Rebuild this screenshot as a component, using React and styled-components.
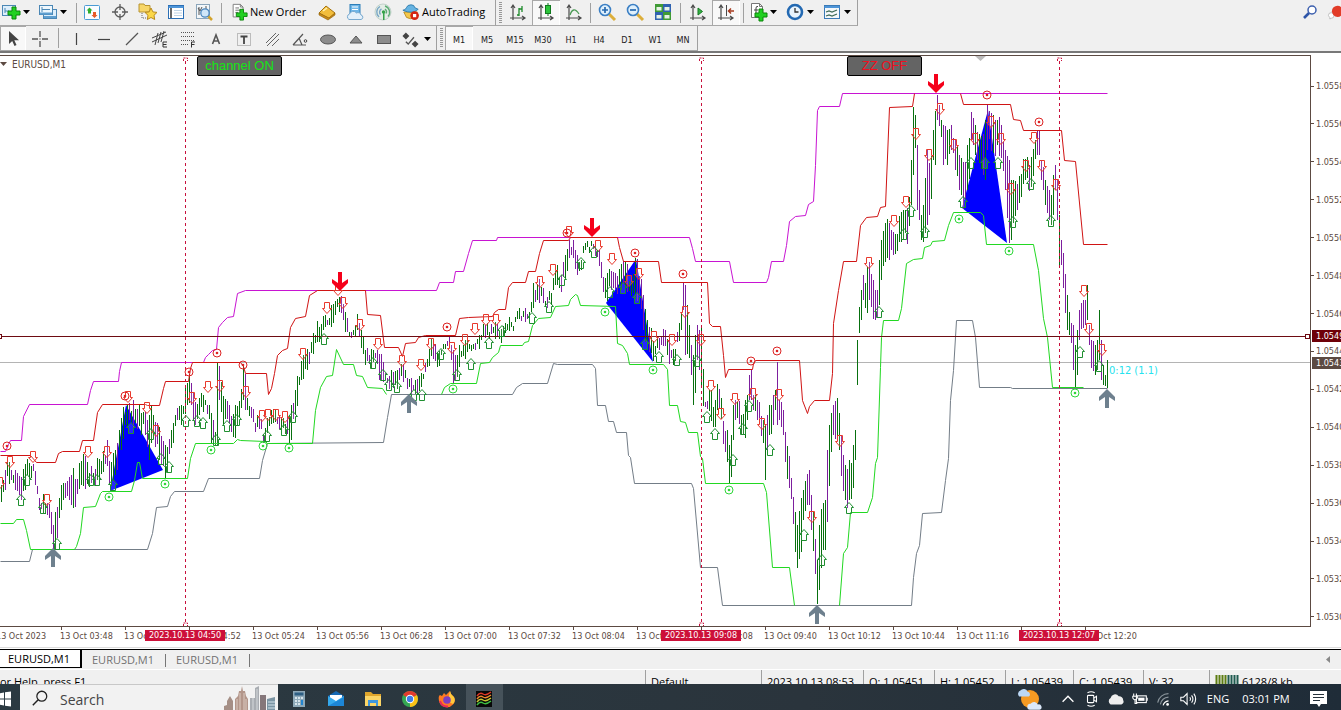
import React from "react";
import styled, { createGlobalStyle, css } from "styled-components";

const UI = `"Open Sans", "Noto Sans", sans-serif`;
const SMALL = `"DejaVu Sans Condensed", "DejaVu Sans", sans-serif`;
const BROWN = "#5c4a42";

const Global = createGlobalStyle`
  * { box-sizing: border-box; }
  body { margin: 0; background: #f0f0f0; font-family: ${UI}; font-size: 11px; color: #111; }
  button, input { font: inherit; color: inherit; }
`;

/* ---------- frame ---------- */
const Shell = styled.div`
  display: flex;
  flex-direction: column;
  height: 100vh;
  min-height: 480px;
  overflow: hidden;
`;
const ToolRow = styled.div`
  display: flex;
  flex: none;
  height: ${(p) => p.$h}px;
  background: #f0f0f0;
`;
const ToolGroup = styled.div`
  display: flex;
  align-items: stretch;
  flex: none;
  width: ${(p) => p.$w}px;
  border-right: 1px solid #a0a0a0;
  border-bottom: 1px solid #a8a8a8;
`;
const Spacer = styled.div`
  flex: 1;
`;
const buttonReset = css`
  border: 0;
  padding: 0;
  background: none;
  display: flex;
  align-items: center;
  justify-content: center;
  white-space: nowrap;
`;
const ToolButton = styled.button`
  ${buttonReset}
  flex: none;
  width: ${(p) => p.$w || 28}px;
  padding-${(p) => (p.$low ? "top" : "bottom")}: 2px;
  ${(p) =>
    p.$on &&
    css`
      background: #f8f8f8;
      box-shadow: inset 1px 1px 0 #a8a8a8, inset -1px 0 0 #fff;
    `}
`;
const PeriodButton = styled(ToolButton)`
  font-family: ${SMALL};
  font-size: 9px;
  color: #222;
  padding-top: 3px;
`;
const LabelButton = styled.button`
  ${buttonReset}
  flex: none;
  justify-content: flex-start;
  gap: 2px;
  padding: 0 0 2px 5px;
  width: ${(p) => p.$w}px;
  font-size: 11px;
  color: #000;
`;
const SplitButton = styled.button`
  ${buttonReset}
  flex: none;
  justify-content: flex-start;
  gap: 2px;
  width: 37px;
  padding-left: 1px;
  padding-${(p) => (p.$low ? "top" : "bottom")}: 2px;
`;
const Separator = styled.span`
  flex: none;
  display: flex;
  justify-content: center;
  align-items: center;
  width: ${(p) => p.$w}px;
  &::before {
    content: "";
    width: 1px;
    height: 20px;
    background: #a0a0a0;
  }
`;
const Grip = styled.span`
  flex: none;
  width: 3px;
  margin: 2px 2px 2px 3px;
  background: repeating-linear-gradient(#999 0 1px, #f0f0f0 1px 2px);
`;
const Divider = styled.div`
  flex: none;
  height: 4px;
  background: #fff;
  border-top: 2px solid #787878;
`;

/* ---------- chart ---------- */
const ChartWindow = styled.main`
  flex: 1;
  min-height: 0;
  display: grid;
  grid-template-columns: minmax(0, 1fr) 30px;
  grid-template-rows: minmax(0, 1fr) 22px;
  background: #fff;
  color: ${BROWN};
  font-family: ${SMALL};
  font-size: 9px;
`;
const Plot = styled.section`
  position: relative;
  min-height: 0;
  border: solid ${BROWN};
  border-width: 1px 1px 1px 0;
  overflow: hidden;
`;
const PlotSvg = styled.svg`
  display: block;
  width: 100%;
  height: 100%;
`;
const PlotTitle = styled.div`
  position: absolute;
  left: 0;
  top: 1px;
  display: flex;
  align-items: center;
  gap: 5px;
  height: 14px;
  font-size: 10px;
`;
const PlotButton = styled.button`
  position: absolute;
  top: 0;
  left: ${(p) => p.$x}px;
  width: ${(p) => p.$w}px;
  height: 20px;
  padding: 0;
  border: 1px solid #000;
  border-radius: 2px;
  background: #646464;
  color: ${(p) => p.$c};
  font-family: "Liberation Sans", sans-serif;
  font-size: 13px;
  line-height: 18px;
`;
const PriceAxis = styled.aside`
  position: relative;
  display: flex;
  flex-direction: column;
  justify-content: space-between;
  padding: 25px 0 4px;
  overflow: hidden;
`;
const PriceLabel = styled.span`
  display: flex;
  align-items: center;
  gap: 2px;
  height: 12px;
  white-space: nowrap;
  &::before {
    content: "";
    flex: none;
    width: 3px;
    height: 1px;
    background: ${BROWN};
  }
`;
const PriceTag = styled.span`
  position: absolute;
  left: 1px;
  right: 0;
  top: ${(p) => p.$y}px;
  height: 12px;
  padding-left: 4px;
  line-height: 12px;
  background: ${(p) => p.$bg};
  color: #fff;
`;
const TimeAxis = styled.footer`
  position: relative;
  grid-column: 1 / -1;
  display: flex;
  overflow: hidden;
  border-bottom: 1px solid #fff;
  box-shadow: inset 0 -1px 0 #dcdcdc;
`;
const TimeLabel = styled.span`
  flex: none;
  width: 64px;
  white-space: nowrap;
  line-height: 12px;
  &:first-child {
    margin-left: -4px;
  }
  &::before {
    content: "";
    display: block;
    width: 1px;
    height: 3px;
    margin-left: 1px;
    background: ${BROWN};
  }
`;
const TimeTag = styled.span`
  position: absolute;
  top: 3px;
  left: ${(p) => p.$x}px;
  width: 80px;
  height: 11px;
  line-height: 11px;
  text-align: center;
  background: #cd1039;
  color: #fff;
`;

/* ---------- tabs and status ---------- */
const TabBar = styled.nav`
  flex: none;
  display: flex;
  align-items: flex-start;
  height: 21px;
  border-top: 1px solid #000;
  box-shadow: inset 0 -1px 0 #fff;
`;
const Tab = styled.button`
  ${buttonReset}
  height: 18px;
  width: ${(p) => (p.$on ? 82 : 84)}px;
  color: ${(p) => (p.$on ? "#000" : "#707070")};
  ${(p) =>
    p.$on
      ? css`
          background: #fff;
          border: solid #000;
          border-width: 0 2px 1px 0;
          padding-right: 2px;
        `
      : css`
          padding-right: 2px;
          background: linear-gradient(#777, #777) right 4px / 1px 13px no-repeat;
        `}
`;
const TabScroll = styled.button`
  ${buttonReset}
  width: 26px;
  height: 18px;
`;
const StatusBar = styled.div`
  flex: none;
  display: grid;
  grid-template-columns: 1fr 116px 102px 71px 71px 68px 70px 66px 132px;
  height: 14px;
  overflow: hidden;
  color: #000;
`;
const StatusCell = styled.span`
  display: flex;
  align-items: center;
  gap: 3px;
  height: 22px;
  padding-left: 5px;
  white-space: nowrap;
  border-left: 1px solid #a0a0a0;
  &:first-child {
    padding-left: 0;
    border: 0;
  }
`;

/* ---------- taskbar ---------- */
const Taskbar = styled.footer`
  flex: none;
  display: flex;
  height: 26px;
  overflow: hidden;
  color: #fff;
  background: linear-gradient(90deg, #2b3a42, #2a343c 60%, #1f2c38);
`;
const StartButton = styled.button`
  ${buttonReset}
  width: 20px;
  justify-content: flex-start;
  padding-top: 3px;
`;
const SearchBox = styled.label`
  display: flex;
  align-items: center;
  width: 258px;
  padding-left: 11px;
  gap: 11px;
  background: #f2f2f2;
  border-top: 1px solid #c8c8c8;
`;
const SearchInput = styled.input`
  flex: 1;
  min-width: 0;
  height: 24px;
  padding: 4px 0 0;
  border: 0;
  outline: 0;
  background: none;
  font-size: 14px;
  color: #333;
  &::placeholder {
    color: #444;
    opacity: 1;
  }
`;
const AppIcons = styled.div`
  display: flex;
  padding-left: 3px;
  align-items: stretch;
`;
const AppButton = styled.button`
  ${buttonReset}
  width: 37px;
  padding-top: 3px;
  padding-right: 2px;
  ${(p) => p.$on && css`background: #46525a;`}
`;
const TrayButton = styled.button`
  ${buttonReset}
  flex: none;
  width: ${(p) => p.$w || 24}px;
  padding-top: 3px;
  color: #fff;
`;

/* ---------- icons ---------- */
const Ico = ({ s = 20, children }) => (
  <svg width={s} height={s} viewBox="0 0 20 20" fill="none" aria-hidden="true">
    {children}
  </svg>
);
const Caret = ({ fill = "#000" }) => (
  <svg width="7" height="4" viewBox="0 0 7 4" aria-hidden="true">
    <path d="M0 0h7L3.500 4z" fill={fill} />
  </svg>
);
const Plus = ({ x = 0, y = 0 }) => (
  <path
    transform={`translate(${x} ${y})`}
    d="M4 0h4v4h4v4H8v4H4V8H0V4h4z"
    fill="#22d022"
    stroke="#0a850a"
  />
);
const Axes = () => (
  <path d="M5 18V4M3 6l2-3 2 3M2 16h14M14 14l3 2-3 2" stroke="#4a4a4a" strokeWidth="1.2" />
);
const Sheet = () => (
  <path d="M3.500 1.500h8l3 3v11h-11zM11.500 1.500v3h3" fill="#fff" stroke="#777" />
);

const icons = {
  newChart: (
    <>
      <rect x="1.500" y="3.500" width="13" height="10" fill="#dceefb" stroke="#4b87b5" />
      <path d="M4 6v5M4 9h4" stroke="#4b87b5" />
      <Plus x={7} y={5} />
    </>
  ),
  profiles: (
    <>
      <rect x="5.500" y="7.500" width="13" height="9" fill="#dceefb" stroke="#4b87b5" />
      <path d="M6 15h12" stroke="#5f9fd0" strokeWidth="2" />
      <rect x="1.500" y="3.500" width="13" height="9" fill="#eef7fd" stroke="#4b87b5" />
      <path d="M4 5v5M4 7.500h8" stroke="#4b87b5" />
      <path d="M2 11.500h12" stroke="#5f9fd0" strokeWidth="2" />
    </>
  ),
  market: (
    <>
      <rect x="2.500" y="3.500" width="15" height="14" rx="1" fill="#fafcff" stroke="#4b9bd5" />
      <path d="M7.500 5.500l3 3H9v3H6v-3H4.500z" fill="#2fae2f" />
      <path d="M12.500 16l3-3H14v-3h-3v3H9.500z" fill="#e65a28" />
    </>
  ),
  navigator: (
    <g stroke="#5c5c5c" strokeWidth="1.300">
      <circle cx="10" cy="10" r="5" />
      <path d="M10 2v6M10 12v6M2 10h6M12 10h6" />
    </g>
  ),
  favorites: (
    <>
      <path d="M1 2h5l1 1.500h5V10H1z" fill="#f7d668" stroke="#b89432" />
      <path d="M4 11v5h4" stroke="#666" strokeDasharray="1 1" />
      <path d="M13 6l1.900 3.900 4.100.5-3 2.900.7 4.200-3.700-2-3.700 2 .7-4.200-3-2.900 4.100-.5z" fill="#fbd748" stroke="#b98a1c" />
    </>
  ),
  dataWindow: (
    <>
      <rect x="2.500" y="3.500" width="15" height="13" fill="#fff" stroke="#2b6fb5" />
      <path d="M2.500 5h15" stroke="#4e95d8" strokeWidth="2" />
      <path d="M5 6v10" stroke="#333" strokeWidth="1.500" />
      <path d="M8 8.500h8M8 11h8M8 13.500h8" stroke="#c0d4e6" />
    </>
  ),
  tester: (
    <>
      <rect x="2.500" y="2.500" width="13" height="14" fill="#f3f7fa" stroke="#8ba5ba" />
      <path d="M4 6l2 3 2-4M5 5v8M12 4v3" stroke="#555" />
      <path d="M14 14l4 4" stroke="#d3a32c" strokeWidth="2.500" />
      <circle cx="11" cy="11" r="4.200" fill="#cfe6f8" stroke="#4a86bd" strokeWidth="1.300" />
    </>
  ),
  order: (
    <>
      <Sheet />
      <path d="M6 5.500h4M6 8h6M6 10.500h3" stroke="#666" />
      <Plus x={7} y={7} />
    </>
  ),
  editor: (
    <>
      <path d="M2 11L9 4l9 7-6 5.500z" fill="#f2bd3c" stroke="#a6730e" />
      <path d="M2 11v2l9 5 7-5v-2l-6 5z" fill="#c98a1a" stroke="#8f610b" strokeWidth=".6" />
      <path d="M6 9l4-3" stroke="#fff0b0" strokeWidth="1.500" />
    </>
  ),
  cloudPc: (
    <>
      <rect x="5" y="2.500" width="10" height="10" fill="#6fb6e8" stroke="#2d7eb8" />
      <path d="M7 5h6M7 7.500h6" stroke="#fff" />
      <path d="M4 17.500a3 3 0 0 1 .5-5.500 4 4 0 0 1 7-1 3 3 0 0 1 4.500 2 2.300 2.300 0 0 1 0 4.500z" fill="#e4f0fa" stroke="#78a9cf" />
    </>
  ),
  signals: (
    <>
      <circle cx="10" cy="10" r="8" fill="#e3ede6" stroke="#c3d2cb" />
      <path d="M6 15a6.500 6.500 0 0 1 1-10.500M7.500 12.500a3.500 3.500 0 0 1 1-5.500" stroke="#7aa6c6" strokeWidth="1.400" />
      <path d="M12 4a6.500 6.500 0 0 1 3 10.500M12 7a3.500 3.500 0 0 1 1 4.500" stroke="#5dac74" strokeWidth="1.400" />
      <circle cx="10.500" cy="10" r="1.700" fill="#35a348" />
      <path d="M10 11h1.500v7H10z" fill="#35a348" />
    </>
  ),
  auto: (
    <>
      <path d="M2 10l3 6q5 3 9 0l3-6z" fill="#f4c84c" stroke="#b88a22" />
      <path d="M1 8q3 0 4-3 1-3 5-3t4 3l4 2q-7 6-17 1z" fill="#65b3e2" stroke="#2e7bab" />
      <circle cx="14" cy="14" r="4.800" fill="#d62412" />
      <rect x="12.200" y="12.200" width="3.600" height="3.600" fill="#fff" />
    </>
  ),
  bars: (
    <>
      <Axes />
      <path d="M11 6v8M9 13h2M11 7h3M14 4v6" stroke="#1d8a2a" strokeWidth="1.300" />
    </>
  ),
  candles: (
    <>
      <Axes />
      <path d="M12 1v13" stroke="#117a1e" />
      <rect x="9.500" y="3.500" width="5" height="8" fill="#2bc43a" stroke="#117a1e" />
    </>
  ),
  line: (
    <>
      <Axes />
      <path d="M6 13c2-6 5-7 9-1" stroke="#4b9a55" strokeWidth="1.300" />
    </>
  ),
  zoomIn: (
    <>
      <path d="M12 12l6 6" stroke="#dcae3a" strokeWidth="3" />
      <circle cx="8" cy="8" r="5.500" fill="#dff0fc" stroke="#3b7fc4" strokeWidth="1.600" />
      <path d="M5 8h6M8 5v6" stroke="#2769b0" strokeWidth="1.700" />
    </>
  ),
  zoomOut: (
    <>
      <path d="M12 12l6 6" stroke="#dcae3a" strokeWidth="3" />
      <circle cx="8" cy="8" r="5.500" fill="#dff0fc" stroke="#3b7fc4" strokeWidth="1.600" />
      <path d="M5 8h6" stroke="#2769b0" strokeWidth="1.700" />
    </>
  ),
  tile: (
    <>
      <rect x="2" y="2" width="8" height="8" fill="#3f9a35" />
      <rect x="10" y="2" width="8" height="8" fill="#2f62b0" />
      <rect x="2" y="10" width="8" height="8" fill="#2f62b0" />
      <rect x="10" y="10" width="8" height="8" fill="#3f9a35" />
      <path d="M3.500 5h5v3.500h-5zM11.500 5h5v3.500h-5zM3.500 13h5v3.500h-5zM11.500 13h5v3.500h-5z" fill="#e6f2e6" />
    </>
  ),
  scroll: (
    <>
      <Axes />
      <path d="M10 6l4.500 3.500L10 13z" fill="#35b043" stroke="#157a22" />
    </>
  ),
  shift: (
    <>
      <Axes />
      <path d="M10.500 3v11" stroke="#4a4a4a" />
      <path d="M18 9h-5M15 6.500L12.500 9l2.500 2.500" stroke="#a63a1e" strokeWidth="1.500" />
    </>
  ),
  indicators: (
    <>
      <Sheet />
      <path d="M8 12V6q0-2 2-1.500M6 8h4" stroke="#444" />
      <Plus x={7} y={7} />
    </>
  ),
  clock: (
    <>
      <circle cx="10" cy="10" r="7" fill="#e9f4fd" stroke="#2369b2" strokeWidth="2.600" />
      <path d="M10 6v4h3.500" stroke="#333" strokeWidth="1.300" />
    </>
  ),
  template: (
    <>
      <rect x="2.500" y="3.500" width="15" height="13" fill="#f4f8fb" stroke="#3a7ab6" />
      <path d="M2.500 5h15" stroke="#4e95d8" strokeWidth="2" />
      <path d="M4 10l3-1 3 1 5-2M4 14l3-1 3 1 5-2" stroke="#3f6b57" strokeWidth="1.200" />
    </>
  ),
  cursor: <path d="M6 2v13l3.200-3 2.300 5 2-1-2.200-4.700H16z" fill="#444" />,
  cross: <path d="M10 2v6M10 12v6M2 10h6M12 10h6M10 9.500v1" stroke="#555" strokeWidth="1.300" />,
  vline: <path d="M10.500 4v12" stroke="#444" strokeWidth="1.200" />,
  hline: <path d="M4 10.500h12" stroke="#444" strokeWidth="1.200" />,
  trend: <path d="M4 16L16 4" stroke="#555" strokeWidth="1.200" />,
  channel: (
    <>
      <path d="M2 13L17 6M2 9l14-6M5 16L8 4M8 14l3-11M11 13l3-11" stroke="#444" />
      <path d="M17 13h-4v5h4M13 15.500h3.500" stroke="#333" />
    </>
  ),
  fibo: (
    <>
      <path d="M3 3.500h14M3 7.500h14M3 11.500h14M3 15.500h8" stroke="#555" strokeDasharray="1 1" />
      <path d="M17 13h-3.500v5.500M13.500 15.500h3" stroke="#333" />
    </>
  ),
  letter: <path d="M6.500 15L10 6l3.500 9M8 12h4" stroke="#555" strokeWidth="1.600" />,
  label: (
    <>
      <rect x="3.500" y="4.500" width="13" height="12" stroke="#888" strokeDasharray="1 1" />
      <path d="M6.500 7.500h7M10 7.500V15" stroke="#444" strokeWidth="1.800" />
    </>
  ),
  parallels: <path d="M4 14L14 4M5 17L17 5M10 17l7-7" stroke="#666" />,
  angle: (
    <>
      <path d="M3 16h13M3 16L13 5M9 9l3 7" stroke="#555" strokeWidth="1.200" />
      <circle cx="15.500" cy="12" r="1.300" stroke="#444" />
    </>
  ),
  ellipse: <ellipse cx="10" cy="10.500" rx="7.500" ry="4.500" fill="#8c8c8c" stroke="#555" />,
  triangle: <path d="M4 14l6-7 6 7z" fill="#8c8c8c" stroke="#555" />,
  rect: <rect x="3.500" y="6.500" width="13" height="8" fill="#8c8c8c" stroke="#555" />,
  arrows: (
    <>
      <path d="M3 7l3-3 3 3-3 3zM11 14l3-3 3 3-3 3z" fill="#444" />
      <path d="M6 12l2 2 5-6" stroke="#555" strokeWidth="1.200" />
    </>
  ),
  find: (
    <>
      <circle cx="12" cy="8" r="4" fill="#fff" stroke="#3c5fae" strokeWidth="1.500" />
      <path d="M9 11l-5 5" stroke="#2e55a8" strokeWidth="2.600" />
    </>
  ),
  chat: (
    <>
      <path d="M2 15a4 4 0 1 1 4 4l-2 1v-2z" fill="#fff" stroke="#aaa" />
      <circle cx="15" cy="9" r="8" fill="#e23c28" />
    </>
  ),
  windows: <path d="M-2 4.500l6-1v6h-6zM5 3.300l6-.8v7H5zM-2 10.500h6v6l-6-1zM5 10.500h6v7l-6-.8z" fill="#fff" />,
  magnifier: (
    <>
      <circle cx="12" cy="8" r="5.500" stroke="#222" strokeWidth="1.400" />
      <path d="M8 12l-6 6" stroke="#222" strokeWidth="1.600" />
    </>
  ),
  calc: (
    <>
      <rect x="4" y="2" width="12" height="16" fill="#8ea9b8" />
      <rect x="5.500" y="3.500" width="9" height="3" fill="#2e5f83" />
      <path d="M6 9h2M9 9h2M12 9h2M6 12h2M9 12h2M6 15h2M9 15h2" stroke="#eef6fa" strokeWidth="1.600" />
      <path d="M13 11v5" stroke="#2385cf" strokeWidth="2" />
    </>
  ),
  mail: (
    <>
      <path d="M2 7l8-5 8 5v10H2z" fill="#1769b3" />
      <path d="M4 6h12v7H4z" fill="#fff" />
      <path d="M2 7l8 5 8-5v10H2z" fill="#35a9ec" />
      <path d="M2 17l16-9v9z" fill="#1d86d6" />
    </>
  ),
  folder: (
    <>
      <path d="M2 3h6l2 2h8v12H2z" fill="#e0a62c" />
      <path d="M2 7h16v10H2z" fill="#fcd667" />
      <path d="M5 11h10v6h-2v-3H7v3H5z" fill="#3f97dd" />
    </>
  ),
  chrome: (
    <>
      <circle cx="10" cy="10" r="8" fill="#35a853" />
      <path d="M10 10L3.100 6A8 8 0 0 1 16.900 6z" fill="#e33b2e" />
      <path d="M10 10l6.900-4A8 8 0 0 1 10 18z" fill="#fbc116" />
      <circle cx="10" cy="10" r="4.200" fill="#fff" />
      <circle cx="10" cy="10" r="3.200" fill="#3e7de8" />
    </>
  ),
  firefox: (
    <>
      <path d="M3 6l2 1 2-3 2 2 4-4 1 3 3 3q2 4-1 7.500T8 18 2 12t1-6z" fill="#ff7a22" />
      <path d="M13 2l1 3 3 3q2 4-1 7l-4-2V6z" fill="#ffc93c" />
      <circle cx="10" cy="11" r="3.800" fill="#7d3fc0" />
      <path d="M3 12q2 6 8 5.500" stroke="#e8285a" strokeWidth="2" />
    </>
  ),
  terminal: (
    <>
      <rect x="2" y="2" width="16" height="16" fill="#080808" />
      <path d="M3 7q3-4 6-2t8-2" stroke="#e03828" strokeWidth="1.500" />
      <path d="M3 10q3-4 6-2t8-2" stroke="#ef8a2c" strokeWidth="1.500" />
      <path d="M3 13q3-4 6-2t8-2" stroke="#c9c934" strokeWidth="1.500" />
      <path d="M3 16q3-4 6-2t8-2" stroke="#3fc242" strokeWidth="1.500" />
    </>
  ),
  weather: (
    <>
      <circle cx="10" cy="10" r="7.500" fill="#f59a23" />
      <path d="M1 8a3 3 0 0 1 1-5 3.500 3.500 0 0 1 6 1 2.200 2.200 0 0 1 1 4z" fill="#bcd8f5" />
      <path d="M10 19a2.500 2.500 0 0 1 .5-5 3.500 3.500 0 0 1 6 .5A2.300 2.300 0 0 1 18 19z" fill="#dbe8fa" />
    </>
  ),
  up: <path d="M4 13l6-6 6 6" stroke="currentColor" strokeWidth="1.500" />,
  meet: (
    <g stroke="currentColor" strokeWidth="1.200">
      <rect x="5" y="6" width="7" height="8" rx="1" />
      <path d="M12 9l3-2v6l-3-2M5 3q4-2 8 0M5 17q4 2 8 0" />
    </g>
  ),
  cloud: <path d="M4 16a4 4 0 0 1 0-7 5 5 0 0 1 9-2 4.500 4.500 0 0 1 5 4.500A3 3 0 0 1 16 16z" fill="#eee" />,
  battery: (
    <>
      <rect x="6" y="6.500" width="11" height="7.500" stroke="currentColor" strokeWidth="1.200" />
      <path d="M8 8.500h7v3.500H8z" fill="currentColor" />
      <path d="M18 8.500v3.500M3 4v3M6 4v3M2 7h5v2q-1 2-2.500 2T2 9zM4.500 11v4H7" stroke="currentColor" strokeWidth="1.200" />
    </>
  ),
  wifi: (
    <g strokeWidth="1.300">
      <path d="M3 14A12 12 0 0 1 15 4M6 16a10 10 0 0 1 9-8" stroke="#8b959c" />
      <path d="M9 17a7 7 0 0 1 6-5" stroke="#fff" />
      <circle cx="14" cy="16" r="1.500" fill="#fff" />
    </g>
  ),
  sound: (
    <g stroke="currentColor" strokeWidth="1.200">
      <path d="M2 8h3l4-4v12l-4-4H2zM12 8q1.500 2 0 4M14 6q3 4 0 8M16.500 4q4 6 0 12" />
    </g>
  ),
  notice: (
    <>
      <path d="M1 2h17v13h-6l-2 3-2-3H1z" fill="#fff" />
      <path d="M4 5.500h11M4 8.500h11M4 11.500h7" stroke="#25313b" strokeWidth="1.200" />
    </>
  ),
};

const Tool = ({ icon, w, on, low }) => (
  <ToolButton $w={w} $on={on} $low={low} aria-label={icon}>
    <Ico>{icons[icon]}</Ico>
  </ToolButton>
);
const Split = ({ icon, s = 20, low }) => (
  <SplitButton $low={low} aria-label={icon}>
    <Ico s={s}>{icons[icon]}</Ico>
    <Caret />
  </SplitButton>
);

/* ---------- chart data: x, high, low ---------- */
const swings = `1 485 502,5 470 490,8 458 480,12 466 488,16 470 495,20 478 500,24 465 490,28 462 480,32 461 475,36 470 490,39 498 510,42 495 515,46 498 510,50 510 528,53 525 549,55 512 549,58 507 530,61 485 510,64 488 500,68 480 495,72 470 506,76 478 505,80 463 480,84 452 490,88 465 490,92 470 488,96 462 480,100 455 478,104 452 470,107 440 466,110 460 490,114 455 480,118 430 465,120 415 450,124 408 435,128 404 425,132 405 425,136 402 430,140 408 432,144 405 430,148 415 462,152 408 440,156 418 448,160 430 460,165 445 478,168 440 465,172 420 445,176 408 430,180 405 422,184 398 420,186 380 410,190 375 405,192 395 420,196 400 424,200 395 415,204 395 410,208 400 415,211 413 443,213 420 445,215 432 445,217 363 445,219 366 400,221 382 412,224 396 425,228 400 425,232 418 435,235 405 438,238 405 425,240 395 412,243 365 400,245 374 410,247 398 410,250 405 425,254 415 430,258 415 430,262 425 438,265 428 442,268 415 430,272 410 425,276 408 422,280 420 432,284 418 430,289 415 443,291 405 440,294 395 420,298 375 398,300 365 385,304 350 375,308 348 370,312 335 352,316 325 348,320 318 347,324 315 330,328 316 332,332 300 325,336 292 315,340 290 310,342 292 318,346 315 335,350 332 338,354 328 338,357 314 330,361 330 348,365 350 365,370 350 372,374 345 360,378 350 375,382 360 380,386 370 385,390 370 388,394 375 393,398 365 385,402 358 375,406 370 388,410 380 394,414 378 398,418 372 395,422 372 380,426 360 380,428 345 365,432 340 360,436 350 368,440 345 360,444 336 348,448 336 350,451 345 360,453 350 384,456 355 380,460 345 365,464 340 362,468 340 355,472 340 352,476 335 348,480 333 345,484 318 340,488 325 340,492 325 342,496 320 338,500 325 342,504 328 342,508 315 335,512 320 325,516 315 320,520 310 320,524 308 318,528 310 318,532 290 315,534 283 303,538 280 300,542 290 300,546 298 312,550 290 305,554 270 290,557 265 285,561 275 292,565 255 278,569 240 258,573 240 258,577 255 275,581 260 270,584 243 255,588 240 252,592 238 252,596 240 258,600 255 270,604 275 300,606 278 303,610 262 288,614 270 290,618 275 290,622 265 290,626 262 295,630 280 300,634 262 298,636 258 300,640 275 300,644 300 340,648 320 355,652 335 362,654 345 364,658 330 350,662 332 348,666 330 350,670 340 365,674 350 365,678 325 345,681 312 330,683 283 310,685 285 355,689 325 358,691 345 375,693 355 405,695 335 393,697 325 360,699 330 370,701 328 385,704 390 412,706 400 418,710 385 408,712 400 430,715 400 427,718 382 410,720 385 410,722 405 425,724 425 455,727 430 462,729 445 483,731 435 477,733 405 440,735 400 420,738 400 425,741 415 435,745 400 438,747 395 420,749 375 400,751 370 400,753 395 410,757 400 420,760 405 428,763 420 443,765 425 480,767 415 450,769 405 435,773 395 425,775 390 410,777 362 425,779 400 420,783 410 435,786 440 470,790 460 495,794 500 540,797 525 568,800 500 567,803 490 520,806 475 510,809 470 505,811 495 530,814 520 560,817 560 604,819 525 590,822 505 560,825 500 550,828 430 515,830 410 455,833 405 435,836 402 450,838 400 440,840 425 460,842 450 495,845 465 500,848 460 512,850 465 500,853 445 488,855 430 460,857 340 385,859 307 333,861 290 320,863 275 300,866 275 315,869 262 300,872 275 320,875 290 320,877 290 318,879 260 305,881 240 280,884 225 262,888 220 262,892 230 255,896 235 250,898 225 250,900 215 245,904 210 240,908 205 245,911 160 205,913 107 175,915 115 148,917 145 210,919 190 220,921 215 240,924 195 240,927 150 225,930 160 215,933 130 160,935 111 165,937 95 120,940 105 130,943 125 165,947 130 165,951 125 150,955 140 170,959 155 190,962 160 208,964 165 210,967 145 190,970 130 170,971 112 140,975 125 155,978 140 170,982 130 170,985 120 180,987 105 150,990 110 145,994 120 160,998 118 150,1002 130 160,1005 150 190,1009 160 243,1011 180 240,1014 180 215,1018 180 215,1022 165 190,1026 155 180,1030 165 200,1034 140 170,1037 131 155,1039 131 155,1041 160 180,1045 180 205,1049 190 220,1051 195 225,1053 175 215,1055 165 190,1057 180 220,1059 215 265,1061 240 265,1064 265 310,1067 295 330,1070 315 340,1073 325 370,1075 345 388,1077 330 375,1079 310 340,1082 295 325,1085 300 325,1087 285 320,1089 325 345,1091 340 368,1095 345 375,1097 340 370,1099 310 360,1101 340 380,1103 365 385,1105 375 386,1107 360 388`
  .split(",")
  .map((t) => t.split(" ").map(Number));

const noise = (n) => {
  const v = Math.sin(n * 12.9898) * 43758.5453;
  return v - Math.floor(v);
};
const candles = [];
for (let x = 1, k = 0; x <= 1107; x += 2) {
  while (k < swings.length - 2 && swings[k + 1][0] <= x) k += 1;
  const [x0, h0, l0] = swings[k];
  const [x1, h1, l1] = swings[k + 1];
  const t = Math.min(1, (x - x0) / (x1 - x0));
  const exact = x === x0 || x === x1;
  const hi = h0 + (h1 - h0) * t + (exact ? 0 : noise(x) * 12 - 4);
  const lo = l0 + (l1 - l0) * t - (exact ? 0 : noise(x + 3) * 12 - 4);
  const rising = h1 + l1 < h0 + l0;
  const green = noise(x + 7) > (rising ? 0.2 : 0.72);
  candles.push({ x, hi: Math.round(hi), lo: Math.round(Math.max(lo, hi + 5)), green });
}
const barPath = (green) =>
  candles
    .filter((c) => c.green === green)
    .map((c) => `M${c.x} ${c.hi}h1V${c.lo}h-1z`)
    .join("");

const bands = [
  {
    color: "#737d87",
    points:
      "0,561 29,561 32,549 147,549 152,533 156,507 167,506 170,496 174,491 203,491 208,478 259,478 262,460 267,443 383,442 387,417 391,394 512,394 516,387 522,383 547,383 553,363 557,364 592,364 595,368 597,405 605,405 608,421 613,421 616,432 626,432 628,455 630,457 634,483 691,483 693,488 700,567 717,567 722,605 911,605 913,577 916,553 919,545 922,513 941,512 945,480 948,458 950,400 953,370 956,320 972,320 975,337 979,387 1010,387 1012,388 1107,388",
  },
  {
    color: "#c814d2",
    points:
      "0,451 5,451 8,444 10,440 21,440 23,416 29,404 87,404 90,390 93,381 118,381 119,371 121,362 203,362 205,357 208,354 212,350 216,349 218,327 222,322 227,317 233,316 237,293 245,290 436,290 439,282 453,282 455,271 463,271 468,253 472,240 496,240 497,237 689,237 692,248 695,261 729,261 733,282 766,282 768,277 771,261 783,261 786,245 789,221 795,216 805,215 808,204 813,201 815,165 817,110 819,106 839,106 842,93 1107,93",
  },
  {
    color: "#d01414",
    points:
      "0,455 30,455 36,462 55,462 58,453 62,451 79,451 82,440 93,440 97,412 102,404 145,404 147,405 159,405 163,388 165,381 188,381 190,368 192,362 240,362 243,366 245,373 266,373 268,394 271,388 274,373 277,355 282,350 287,348 290,327 295,318 305,316 309,295 317,290 365,290 367,314 380,315 384,347 398,347 402,356 405,343 415,342 418,337 425,335 455,335 459,318 468,317 492,316 494,312 498,309 505,309 508,287 512,282 525,282 528,271 535,271 539,253 543,240 568,240 570,237 617,237 619,247 623,261 658,261 661,282 707,282 709,323 712,326 720,326 723,355 725,377 728,369 752,369 753,363 755,360 799,360 802,400 807,413 809,406 814,400 829,400 832,373 833,323 838,290 843,261 856,261 860,225 866,217 877,216 880,207 885,206 889,107 912,106 914,93 960,93 963,104 1010,104 1013,119 1020,120 1023,130 1061,130 1064,160 1075,161 1083,244 1107,244",
  },
  {
    color: "#c814d2",
    points: "914,93 960,93",
  },
  {
    color: "#22d822",
    points:
      "0,523 13,523 16,519 23,519 26,530 30,549 74,549 76,546 80,533 83,507 95,506 100,493 102,491 131,491 134,480 137,462 139,462 142,478 187,478 190,458 195,443 233,443 237,439 240,440 265,441 267,443 312,443 315,410 320,387 326,376 332,375 336,349 343,364 353,364 356,375 362,376 367,387 382,388 386,394",
  },
  {
    color: "#22d822",
    points:
      "441,394 444,387 450,383 476,383 480,363 489,362 492,357 498,352 500,345 522,345 524,342 528,341 532,325 538,318 550,317 555,306 568,305 570,299 575,294 577,295 580,305 615,306 617,343 622,345 627,353 629,364 663,364 667,369 669,405 677,405 680,421 685,422 688,432 697,432 700,456 702,458 705,483 763,483 766,492 772,567 789,567 794,605",
  },
  {
    color: "#22d822",
    points:
      "839,605 843,553 847,547 850,512 867,512 872,497 875,463 877,457 880,367 881,337 883,320 898,320 901,308 906,263 913,259 922,258 924,247 930,245 932,241 944,240 948,225 953,212 980,212 983,215 986,244 1033,244 1038,270 1043,318 1047,337 1052,387 1083,387",
  },
];

const downMarks = [
  [0, 483], [10, 462], [33, 457], [47, 500], [88, 452], [107, 452], [128, 397], [147, 408], [156, 431], [192, 398],
  [208, 387], [220, 386], [246, 392], [262, 416], [268, 415], [276, 415], [285, 417], [303, 354], [327, 308], [338, 290],
  [343, 303], [360, 325], [378, 344], [402, 361], [421, 365], [431, 344], [452, 348], [465, 340], [475, 329], [486, 320],
  [496, 320], [540, 282], [553, 270], [569, 232], [598, 246], [612, 259], [629, 281], [639, 274], [654, 337], [672, 340],
  [685, 312], [701, 340], [711, 386], [721, 414], [735, 399], [753, 394], [762, 424], [779, 395], [812, 517], [840, 441],
  [869, 263], [894, 221], [906, 202], [916, 134], [929, 155], [940, 109], [954, 145], [975, 139], [991, 122], [1001, 139],
  [1011, 189], [1026, 166], [1034, 138], [1042, 166], [1056, 185], [1084, 291], [1089, 329], [1102, 350],
];
const upMarks = [
  [21, 500], [27, 480], [43, 508], [57, 544], [91, 480], [97, 480], [113, 485], [131, 428], [151, 434], [161, 459],
  [169, 467], [186, 421], [197, 421], [203, 423], [216, 440], [227, 426], [237, 420], [267, 436], [284, 430], [293, 417],
  [324, 339], [373, 363], [383, 375], [389, 385], [397, 387], [414, 395], [422, 395], [441, 354], [457, 375], [471, 364],
  [489, 343], [502, 331], [532, 318], [549, 307], [562, 280], [581, 263], [594, 252], [610, 292], [623, 288], [637, 298],
  [645, 344], [659, 357], [677, 360], [697, 361], [707, 417], [715, 434], [733, 460], [743, 429], [749, 406], [770, 450],
  [804, 535], [822, 560], [849, 508], [879, 312], [904, 234], [911, 211], [925, 232], [963, 202], [971, 163], [985, 163],
  [998, 163], [1013, 222], [1031, 184], [1051, 221], [1080, 352], [1099, 366],
];
const redRings = [
  [7, 446], [125, 396], [189, 372], [217, 353], [243, 365], [447, 327], [567, 233], [635, 253], [683, 274], [751, 361],
  [777, 351], [987, 95], [1039, 122],
];
const greenRings = [
  [109, 497], [165, 484], [211, 450], [263, 446], [289, 448], [453, 389], [605, 312], [653, 370], [729, 490], [959, 219],
  [1009, 251], [1075, 393],
];

const Mark = ({ x, y, up }) => (
  <path
    transform={`translate(${x} ${y})${up ? " scale(1 -1)" : ""}`}
    d="M-2.500-5.500h5v6h2L0 5.500-4.500.5h2z"
    fill="#fff"
    fillOpacity=".15"
    stroke={up ? "#1f8f30" : "#e8392c"}
  />
);
const Ring = ({ x, y, color }) => (
  <g transform={`translate(${x} ${y})`}>
    <circle r="4" fill="none" stroke={color} />
    <circle r="1.300" fill={color} />
  </g>
);
const BigArrow = ({ x, y, color, up }) => (
  <path
    transform={`translate(${x} ${y})${up ? " scale(1 -1)" : ""}`}
    d="M-2-19h4v11l6-4v4L0 0l-8-8v-4l6 4z"
    fill={color}
  />
);

const PriceChart = () => (
  <PlotSvg viewBox="0 56 1310 570" role="img" aria-label="EURUSD one minute price chart">
    <path d="M975 56h11l-5.500 5z" fill="#bbb" />
    <path d="M0 362.500h1310" stroke="#b4b4b4" />
    <g fill="#0000ff">
      <path d="M126 405l37 65-53 21z" />
      <path d="M636 259l17 103-47-59z" />
      <path d="M988 110l19 133-45-35z" />
    </g>
    <path d={barPath(true)} fill="#08700f" />
    <path d={barPath(false)} fill="#7d1f9e" />
    {bands.map((b, i) => (
      <polyline key={i} points={b.points} transform="translate(.5 .5)" fill="none" stroke={b.color} />
    ))}
    <path d="M0 336.500h1308" stroke="#6e0b12" />
    <g fill="#fff" stroke="#6e0b12">
      <rect x="-2.500" y="334.500" width="4" height="4" />
      <rect x="1305.500" y="334.500" width="4" height="4" />
    </g>
    {[185.5, 701.5, 1059.5].map((x) => (
      <g key={x} stroke="#c8103c" fill="none">
        <path d={`M${x} 61V622`} strokeDasharray="3 3" />
        <path d={`M${x - 2} 61v-3h4v3M${x - 2} 626v-3h4v3`} strokeDasharray="2 1" />
      </g>
    ))}
    {downMarks.map(([x, y]) => (
      <Mark key={`${x}-${y}`} x={x} y={y} />
    ))}
    {upMarks.map(([x, y]) => (
      <Mark key={`${x}-${y}`} x={x} y={y} up />
    ))}
    {redRings.map(([x, y]) => (
      <Ring key={x} x={x} y={y} color="#dc2323" />
    ))}
    {greenRings.map(([x, y]) => (
      <Ring key={x} x={x} y={y} color="#2fd63a" />
    ))}
    <BigArrow x={340} y={291} color="#f5001a" />
    <BigArrow x={592} y={237} color="#f5001a" />
    <BigArrow x={936} y={93} color="#f5001a" />
    <BigArrow x={53} y={548} color="#6e808e" up />
    <BigArrow x={409} y={394} color="#6e808e" up />
    <BigArrow x={817} y={605} color="#6e808e" up />
    <BigArrow x={1107} y={389} color="#6e808e" up />
    <text x="1109" y="374" fill="#25e2ee" fontSize="11">
      0:12 (1.1)
    </text>
  </PlotSvg>
);

const prices = ["58", "56", "54", "52", "50", "48", "46", "44", "42", "40", "38", "36", "34", "32", "30"];
const times = [
  "2023", "03:48", "04:20", "04:52", "05:24", "05:56", "06:28", "07:00", "07:32", "08:04", "08:36", "09:08", "09:40",
  "10:12", "10:44", "11:16", "11:48", "12:20",
];
const drawTools = ["vline", "hline", "trend", "channel", "fibo", "letter", "label", "parallels", "angle", "ellipse", "triangle", "rect"];
const periods = ["M1", "M5", "M15", "M30", "H1", "H4", "D1", "W1", "MN"];
const quotes = ["Default", "2023.10.13 08:53", "O: 1.05451", "H: 1.05452", "L: 1.05439", "C: 1.05439", "V: 32"];

const Skyline = () => (
  <svg width="54" height="25" viewBox="0 0 54 25" aria-hidden="true">
    <path d="M0 25v-4l3-1v-4l3-5 3 5v9z" fill="#a58f86" />
    <path d="M11 25V14l3-3 1-5h2l1-5 1 5h2l1 5 2 3v11z" fill="#b3968a" />
    <path d="M13 25V14M16 25V8M20 25V8M22 25V14" stroke="#dccbc1" />
    <path d="M26 25V13h5V3l4-2v24z" fill="#a9adb2" />
    <path d="M33 25V4M29 25V13" stroke="#d6dadd" />
    <path d="M36 25V10h6v15z" fill="#85777a" />
    <path d="M43 25V14l8-2v13z" fill="#7b95a4" />
    <path d="M44 17h7M44 20h7M44 23h7" stroke="#d3e2ea" />
  </svg>
);

export default function App() {
  return (
    <Shell>
      <Global />
      <ToolRow $h={26}>
        <ToolGroup $w={496}>
          <Split icon="newChart" />
          <Split icon="profiles" />
          <Separator $w={4} />
          {["market", "navigator", "favorites", "dataWindow", "tester"].map((i) => (
            <Tool key={i} icon={i} />
          ))}
          <Separator $w={7} />
          <LabelButton $w={88}>
            <Ico s={18}>{icons.order}</Ico>New Order
          </LabelButton>
          {["editor", "cloudPc", "signals"].map((i) => (
            <Tool key={i} icon={i} />
          ))}
          <LabelButton $w={97}>
            <Ico s={18}>{icons.auto}</Ico>AutoTrading
          </LabelButton>
        </ToolGroup>
        <ToolGroup $w={362}>
          <Grip />
          <Tool icon="bars" />
          <Tool icon="candles" on />
          <Tool icon="line" />
          <Separator $w={5} />
          <Tool icon="zoomIn" />
          <Tool icon="zoomOut" />
          <Tool icon="tile" />
          <Separator $w={7} />
          <Tool icon="scroll" />
          <Tool icon="shift" on />
          <Separator $w={7} />
          <Split icon="indicators" />
          <Split icon="clock" />
          <Split icon="template" />
        </ToolGroup>
        <Spacer />
        <Tool icon="find" w={34} />
        <Tool icon="chat" w={14} />
      </ToolRow>
      <ToolRow $h={25}>
        <ToolGroup $w={437}>
          <Tool icon="cursor" w={26} on low />
          <Tool icon="cross" low />
          <Separator $w={8} />
          {drawTools.map((i) => (
            <Tool key={i} icon={i} low />
          ))}
          <Split icon="arrows" s={23} low />
        </ToolGroup>
        <ToolGroup $w={261}>
          <Grip />
          {periods.map((p) => (
            <PeriodButton key={p} $on={p === "M1"} $low>
              {p}
            </PeriodButton>
          ))}
        </ToolGroup>
      </ToolRow>
      <Divider />

      <ChartWindow>
        <Plot>
          <PriceChart />
          <PlotTitle>
            <Caret fill={BROWN} />
            EURUSD,M1
          </PlotTitle>
          <PlotButton $x={197} $w={85} $c="#14e614">
            channel ON
          </PlotButton>
          <PlotButton $x={847} $w={75} $c="#f01020">
            ZZ OFF
          </PlotButton>
        </Plot>
        <PriceAxis>
          {prices.map((p) => (
            <PriceLabel key={p}>1.05{p}</PriceLabel>
          ))}
          <PriceTag $y={275} $bg="#6e0008">
            1.0549
          </PriceTag>
          <PriceTag $y={302} $bg={BROWN}>
            1.0543
          </PriceTag>
        </PriceAxis>
        <TimeAxis>
          {times.map((t) => (
            <TimeLabel key={t}>13 Oct {t}</TimeLabel>
          ))}
          <TimeTag $x={145}>2023.10.13 04:50</TimeTag>
          <TimeTag $x={661}>2023.10.13 09:08</TimeTag>
          <TimeTag $x={1019}>2023.10.13 12:07</TimeTag>
        </TimeAxis>
      </ChartWindow>

      <TabBar>
        <Tab $on>EURUSD,M1</Tab>
        <Tab>EURUSD,M1</Tab>
        <Tab>EURUSD,M1</Tab>
        <Spacer />
        <TabScroll aria-label="Scroll tabs left">
          <svg width="4" height="7" viewBox="0 0 4 7" aria-hidden="true">
            <path d="M4 0v7L0 3.500z" fill="#888" />
          </svg>
        </TabScroll>
      </TabBar>

      <StatusBar>
        <StatusCell>or Help, press F1</StatusCell>
        {quotes.map((q) => (
          <StatusCell key={q}>{q}</StatusCell>
        ))}
        <StatusCell>
          <svg width="24" height="12" viewBox="0 0 24 12" aria-hidden="true">
            <path d="M1.500 0v12M4.500 0v12M7.500 0v12M10.500 0v12" stroke="#5d7d12" strokeWidth="2" />
            <path d="M13.500 0v12M16.500 0v12M19.500 0v12M22.500 0v12" stroke="#1f5b50" strokeWidth="2" />
          </svg>
          6128/8 kb
        </StatusCell>
      </StatusBar>

      <Taskbar>
        <StartButton aria-label="Start">
          <Ico>{icons.windows}</Ico>
        </StartButton>
        <SearchBox>
          <Ico s={18}>{icons.magnifier}</Ico>
          <SearchInput placeholder="Search" aria-label="Search" />
          <Skyline />
        </SearchBox>
        <AppIcons>
          {["calc", "mail", "folder", "chrome", "firefox", "terminal"].map((i) => (
            <AppButton key={i} $on={i === "terminal"} aria-label={i}>
              <Ico>{icons[i]}</Ico>
            </AppButton>
          ))}
        </AppIcons>
        <Spacer />
        <TrayButton $w={52} aria-label="weather">
          <Ico s={24}>{icons.weather}</Ico>
        </TrayButton>
        {["up", "meet", "cloud", "battery", "wifi", "sound"].map((i) => (
          <TrayButton key={i} aria-label={i}>
            <Ico s={18}>{icons[i]}</Ico>
          </TrayButton>
        ))}
        <TrayButton $w={36}>ENG</TrayButton>
        <TrayButton $w={60}>03:01 PM</TrayButton>
        <TrayButton $w={45} aria-label="notifications">
          <Ico s={20}>{icons.notice}</Ico>
        </TrayButton>
      </Taskbar>
    </Shell>
  );
}
